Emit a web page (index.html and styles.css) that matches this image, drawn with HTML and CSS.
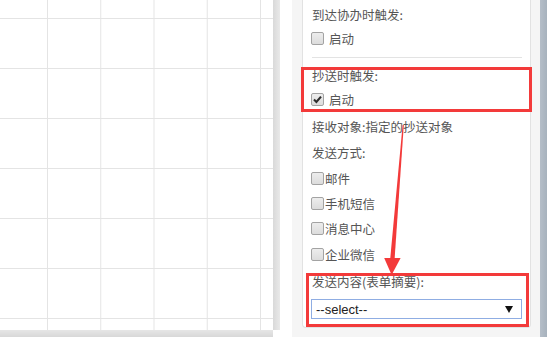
FILE: index.html
```html
<!DOCTYPE html>
<html lang="zh-CN">
<head>
  <meta charset="UTF-8">
  <meta name="viewport" content="width=device-width, initial-scale=1.0">
  <title>流程设置</title>
  <link rel="stylesheet" href="styles.css">
</head>
<body>
  <div class="workspace">
    <!-- 画布 -->
    <div class="canvas-area">
      <div class="canvas-row">
        <div class="canvas"></div>
        <div class="vscroll"></div>
      </div>
      <div class="hscroll-row">
        <div class="hscroll"></div>
        <div class="corner"></div>
      </div>
    </div>

    <div class="gap"></div>

    <!-- 属性面板 -->
    <aside class="sidebar">
      <div class="panel">
        <p class="label">到达协办时触发:</p>
        <label class="check wide first"><span class="cb"></span>启动</label>
        <hr class="sep">

        <div class="mark mark-cc">
          <p class="label tight">抄送时触发:</p>
          <label class="check wide">
            <span class="cb">
              <svg width="11" height="11" viewBox="0 0 11 11"><path d="M2 5.6 L4.4 8 L9 2.6" fill="none" stroke="#2e2e2e" stroke-width="2.1"/></svg>
            </span>启动
          </label>
        </div>

        <p class="label after-mark">接收对象:指定的抄送对象</p>
        <p class="label row">发送方式:</p>
        <label class="check row"><span class="cb"></span>邮件</label>
        <label class="check row"><span class="cb"></span>手机短信</label>
        <label class="check row"><span class="cb"></span>消息中心</label>
        <label class="check row last"><span class="cb"></span>企业微信</label>

        <div class="mark mark-content">
          <p class="label tight">发送内容(表单摘要):</p>
          <div class="select">
            <span>--select--</span>
            <svg width="8" height="7" viewBox="0 0 8 7"><path d="M0 0 H8 L4 7 Z" fill="#111"/></svg>
          </div>
        </div>
      </div>
    </aside>

    <div class="vbar"></div>
  </div>

  <!-- 标注箭头 -->
  <svg class="note-arrow" width="551" height="337" viewBox="0 0 551 337">
    <path d="M402.6 125 L403.8 125 L394.6 259 L390.2 259 Z" fill="#f33a3a"/>
    <path d="M384.2 258 L400.6 258 L391.6 275 Z" fill="#f33a3a"/>
  </svg>
</body>
</html>
```

FILE: styles.css
```css
/* Bas */
body {
  margin: 0;
  width: 551px;
  height: 337px;
  overflow: hidden;
  position: relative;
  background-color: #ffffff;
  font-family: "Noto Sans CJK SC", "Noto Sans", sans-serif;
  font-size: 12.5px;
  color: #555555;
}

.workspace {
  display: flex;
  height: 337px;
}

/* Canvas */
.canvas-area {
  width: 280px;
  display: flex;
  flex-direction: column;
}

.canvas-row {
  display: flex;
  height: 330px;
}

.canvas {
  width: 273px;
  background-color: #ffffff;
  background-image:
    linear-gradient(to right, #e4e4e4 1px, transparent 1px),
    linear-gradient(to bottom, #e4e4e4 1px, transparent 1px);
  background-size: 53.25px 50px;
  background-position: 47px 18px;
}

.vscroll {
  width: 7px;
  background: linear-gradient(to right, #d9d9d9, #e9e9e9);
}

.hscroll-row {
  display: flex;
  height: 7px;
}

.hscroll {
  width: 273px;
  background: linear-gradient(to bottom, #e6e6e6, #d8d8d8);
}

.corner {
  width: 7px;
}

.gap {
  width: 12px;
}

/* Sidomeny */
.sidebar {
  width: 248px;
  box-sizing: border-box;
  padding: 0 9px 0 10px;
  background-color: #f5f5f5;
}

.panel {
  background-color: #ffffff;
  border: 1px solid #e2e2e2;
  border-top: none;
  border-radius: 0 0 4px 4px;
  padding: 5px 8px 0 9px;
}

.label {
  margin: 0;
  line-height: 20px;
}

.label.tight {
  line-height: 12px;
}

.check {
  display: flex;
  align-items: center;
  height: 20px;
  margin-top: 5px;
}

.check.first {
  margin-top: 3px;
}

.check.row {
  margin-top: 5px;
}

.label.row {
  margin-top: 6px;
}

.check.last {
  margin-top: 6px;
}

.cb {
  width: 11px;
  height: 11px;
  margin-left: -1px;
  margin-right: 1px;
  border: 1px solid #a3a3a3;
  border-radius: 2px;
  background: linear-gradient(to bottom, #ededed, #dcdcdc);
  display: flex;
  align-items: center;
  justify-content: center;
}

.check.wide .cb {
  margin-right: 5px;
}

.sep {
  margin: 9px 0 0;
  border: none;
  border-top: 1px solid #e3e3e3;
}

/* Markeringar */
.mark {
  border: 3px solid #f33a3a;
}

.mark-cc {
  margin: 9px -10px 0 -11px;
  padding: 0 0 0 8px;
}

.mark-cc .check {
  margin-top: 7px;
}

.after-mark {
  margin-top: 5px;
}

.mark-content {
  margin: 9px -7px 0 -6px;
  padding: 0 4px 5px 3px;
}

.select {
  display: flex;
  align-items: center;
  justify-content: space-between;
  height: 18px;
  margin: 11px 0 0 -1px;
  padding: 0 8px 0 4px;
  border: 1px solid #8fade3;
  font-family: "Liberation Sans", Arial, sans-serif;
  font-size: 13px;
  color: #222222;
}

.vbar {
  width: 7px;
  background: linear-gradient(to right, #b5bec8, #a7b2bd);
}

/* Pil */
.note-arrow {
  position: absolute;
  top: 0;
  left: 0;
  pointer-events: none;
}
```
